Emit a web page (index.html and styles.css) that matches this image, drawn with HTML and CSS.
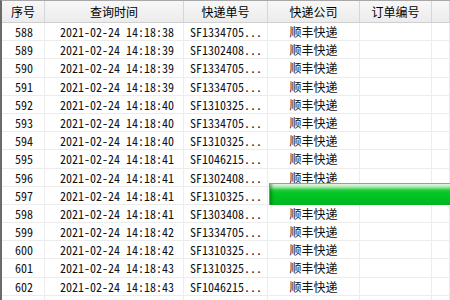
FILE: index.html
```html
<!DOCTYPE html>
<html lang="zh-CN">
<head>
<meta charset="utf-8">
<title>快递查询</title>
<link rel="stylesheet" href="styles.css">
</head>
<body>
<div class="view">
  <div class="grid">
    <div class="hd">序号</div><div class="hd">查询时间</div><div class="hd">快递单号</div><div class="hd">快递公司</div><div class="hd">订单编号</div><div class="hd"></div>

    <div class="c n">588</div><div class="c t">2021-02-24 14:18:38</div><div class="c s">SF1334705...</div><div class="c co">顺丰快递</div><div class="c"></div><div class="c"></div>
    <div class="c n">589</div><div class="c t">2021-02-24 14:18:39</div><div class="c s">SF1302408...</div><div class="c co">顺丰快递</div><div class="c"></div><div class="c"></div>
    <div class="c n">590</div><div class="c t">2021-02-24 14:18:39</div><div class="c s">SF1334705...</div><div class="c co">顺丰快递</div><div class="c"></div><div class="c"></div>
    <div class="c n">591</div><div class="c t">2021-02-24 14:18:39</div><div class="c s">SF1334705...</div><div class="c co">顺丰快递</div><div class="c"></div><div class="c"></div>
    <div class="c n">592</div><div class="c t">2021-02-24 14:18:40</div><div class="c s">SF1310325...</div><div class="c co">顺丰快递</div><div class="c"></div><div class="c"></div>
    <div class="c n">593</div><div class="c t">2021-02-24 14:18:40</div><div class="c s">SF1334705...</div><div class="c co">顺丰快递</div><div class="c"></div><div class="c"></div>
    <div class="c n">594</div><div class="c t">2021-02-24 14:18:40</div><div class="c s">SF1310325...</div><div class="c co">顺丰快递</div><div class="c"></div><div class="c"></div>
    <div class="c n">595</div><div class="c t">2021-02-24 14:18:41</div><div class="c s">SF1046215...</div><div class="c co">顺丰快递</div><div class="c"></div><div class="c"></div>
    <div class="c n">596</div><div class="c t">2021-02-24 14:18:41</div><div class="c s">SF1302408...</div><div class="c co">顺丰快递</div><div class="c"></div><div class="c"></div>
    <div class="c n">597</div><div class="c t">2021-02-24 14:18:41</div><div class="c s">SF1310325...</div><div class="c co">顺丰快递</div><div class="c"></div><div class="c"></div>
    <div class="c n">598</div><div class="c t">2021-02-24 14:18:41</div><div class="c s">SF1303408...</div><div class="c co">顺丰快递</div><div class="c"></div><div class="c"></div>
    <div class="c n">599</div><div class="c t">2021-02-24 14:18:42</div><div class="c s">SF1334705...</div><div class="c co">顺丰快递</div><div class="c"></div><div class="c"></div>
    <div class="c n">600</div><div class="c t">2021-02-24 14:18:42</div><div class="c s">SF1310325...</div><div class="c co">顺丰快递</div><div class="c"></div><div class="c"></div>
    <div class="c n">601</div><div class="c t">2021-02-24 14:18:43</div><div class="c s">SF1310325...</div><div class="c co">顺丰快递</div><div class="c"></div><div class="c"></div>
    <div class="c n">602</div><div class="c t">2021-02-24 14:18:43</div><div class="c s">SF1046215...</div><div class="c co">顺丰快递</div><div class="c"></div><div class="c"></div>
    <div class="c n"></div><div class="c t"></div><div class="c s"></div><div class="c co"></div><div class="c"></div><div class="c"></div>
  </div>
  <div class="progress"></div>
</div>
</body>
</html>
```

FILE: styles.css
```css
html, body {
  margin: 0;
  padding: 0;
  background: #ffffff;
}
.view {
  position: relative;
  width: 450px;
  height: 300px;
  overflow: hidden;
  box-sizing: border-box;
  border-left: 2px solid #6a6a6a;
  border-top: 1px solid #a8a8a8;
}
.grid {
  display: grid;
  grid-template-columns: 43px 139px 84px 92px 72px 1fr;
  grid-template-rows: 22px;
  grid-auto-rows: 18.2px;
  font-family: "Noto Sans Mono CJK SC", "Noto Sans CJK SC", "Liberation Mono", monospace;
  font-size: 12px;
  color: #111;
}
.hd {
  box-sizing: border-box;
  background: linear-gradient(to bottom, #f7f7f7, #ececec);
  border-right: 1px solid #d6d6d6;
  border-bottom: 1px solid #cfcfcf;
  font-family: "Noto Sans CJK SC", sans-serif;
  font-size: 12px;
  line-height: 21px;
  text-align: center;
  color: #000;
}
.c {
  box-sizing: border-box;
  border-right: 1px solid #ececec;
  border-bottom: 1px solid #ececec;
  line-height: 18px;
  white-space: nowrap;
  overflow: hidden;
}
.n {
  text-align: center;
  padding-left: 2px;
}
.t {
  text-align: center;
  padding-left: 6px;
}
.s {
  padding-left: 6px;
}
.co {
  text-align: center;
  font-family: "Noto Sans CJK SC", sans-serif;
}
.progress {
  position: absolute;
  left: 267px;
  top: 182px;
  width: 190px;
  height: 22px;
  box-sizing: border-box;
  border-top: 1px solid #9c9c9c;
  border-left: 1px solid #8a8a8a;
  background: linear-gradient(to bottom, #e6f6e6 0px, #c4eec4 2px, #7ee08a 4px, #22cc3c 6px, #02c626 9px, #00bf22 16px, #00b41e 21px);
  box-shadow: inset 4px 0 3px -2px rgba(0, 90, 0, 0.45);
}
```
